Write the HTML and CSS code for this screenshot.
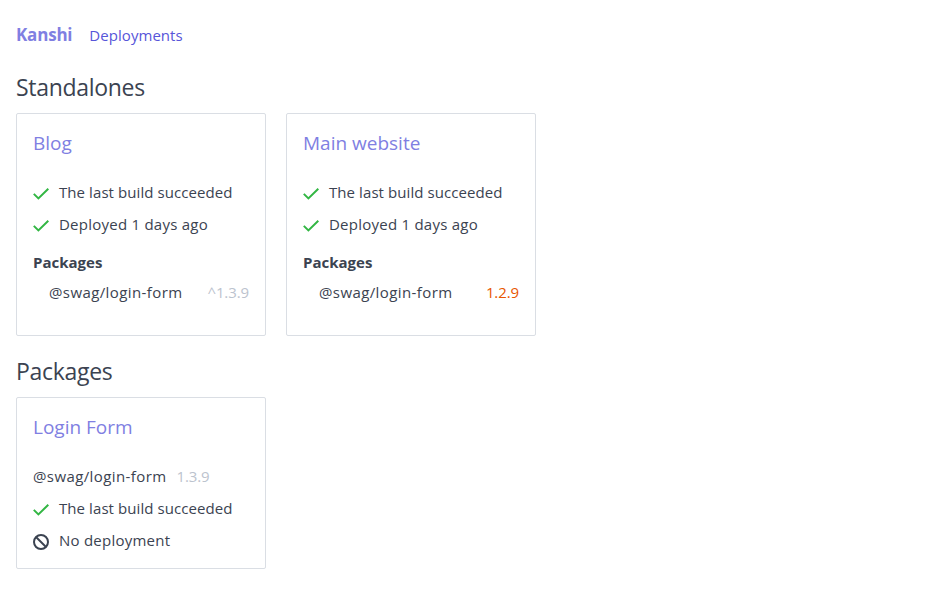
FILE: index.html
```
<!DOCTYPE html>
<html lang="en">
<head>
<meta charset="utf-8">
<title>Kanshi</title>
<link rel="stylesheet" href="styles.css">
</head>
<body>
<svg class="sprite" aria-hidden="true">
  <symbol id="check" viewBox="0 0 16 16"><path d="M.8 7.9 5.4 12.4 15.3 2.8" fill="none" stroke="currentColor" stroke-width="2"/></symbol>
  <symbol id="none" viewBox="0 0 16 16"><g fill="none" stroke="currentColor" stroke-width="2"><circle cx="8" cy="8" r="7"/><path d="M3 3 13 13"/></g></symbol>
</svg>
<header class="navbar">
  <a class="brand" href="#">Kanshi</a>
  <a class="nav-link" href="#">Deployments</a>
</header>
<main>
  <section class="section">
    <h1 class="heading">Standalones</h1>
    <div class="cards">
      <article class="card standalone">
        <h2 class="card-title">Blog</h2>
        <p class="status"><svg class="icon success"><use href="#check"/></svg><span class="build">The last build succeeded</span></p>
        <p class="status"><svg class="icon success"><use href="#check"/></svg><span class="deploy">Deployed 1 days ago</span></p>
        <h3 class="subheading">Packages</h3>
        <div class="dependency"><span class="package">@swag/login-form</span><span class="version">^1.3.9</span></div>
      </article>
      <article class="card standalone">
        <h2 class="card-title">Main website</h2>
        <p class="status"><svg class="icon success"><use href="#check"/></svg><span class="build">The last build succeeded</span></p>
        <p class="status"><svg class="icon success"><use href="#check"/></svg><span class="deploy">Deployed 1 days ago</span></p>
        <h3 class="subheading">Packages</h3>
        <div class="dependency"><span class="package">@swag/login-form</span><span class="version outdated">1.2.9</span></div>
      </article>
    </div>
  </section>
  <section class="section">
    <h1 class="heading">Packages</h1>
    <div class="cards">
      <article class="card">
        <h2 class="card-title">Login Form</h2>
        <p class="release"><span class="package">@swag/login-form</span><span class="version">1.3.9</span></p>
        <p class="status"><svg class="icon success"><use href="#check"/></svg><span class="build">The last build succeeded</span></p>
        <p class="status"><svg class="icon"><use href="#none"/></svg><span class="deploy">No deployment</span></p>
      </article>
    </div>
  </section>
</main>
</body>
</html>
```
FILE: styles.css
```
* { box-sizing: border-box; margin: 0; }
body {
  padding: 16px;
  background: #fff;
  color: #3b4351;
  font: 15px/24px "Open Sans", "Noto Sans", sans-serif;
}
a { text-decoration: none; }
.sprite { display: none; }
.navbar { display: flex; align-items: center; height: 38px; gap: 17px; }
.brand { color: #807fe2; font-size: 17px; font-weight: 700; letter-spacing: -.2px; }
.nav-link { color: #5755d9; letter-spacing: .05px; }
.section { padding-top: 15px; }
.section + .section { padding-top: 17px; }
.heading { font-size: 23px; font-weight: 400; line-height: 36px; letter-spacing: -.3px; margin-bottom: 8px; }
.cards { display: flex; gap: 20px; }
.card {
  width: 250px;
  height: 172px;
  padding: 16px;
  border: 1px solid #dadee4;
  border-radius: 2px;
}
.standalone { height: 223px; }
.card-title { color: #807fe2; font-size: 19px; font-weight: 400; line-height: 26px; margin-bottom: 20px; }
.status, .release { display: flex; align-items: center; height: 32px; }
.status { gap: 10px; }
.release { gap: 10px; }
.icon { width: 16px; height: 16px; margin-top: 3px; }
.success { color: #32b643; }
.build { letter-spacing: .08px; }
.deploy { letter-spacing: .24px; }
.subheading { font-size: 15px; font-weight: 700; line-height: 24px; margin-top: 10px; }
.dependency { display: flex; justify-content: space-between; padding-left: 16px; line-height: 24px; margin-top: 6px; }
.package { letter-spacing: .4px; }
.version { color: #bcc3ce; letter-spacing: -.1px; }
.outdated { color: #e85600; }
```
